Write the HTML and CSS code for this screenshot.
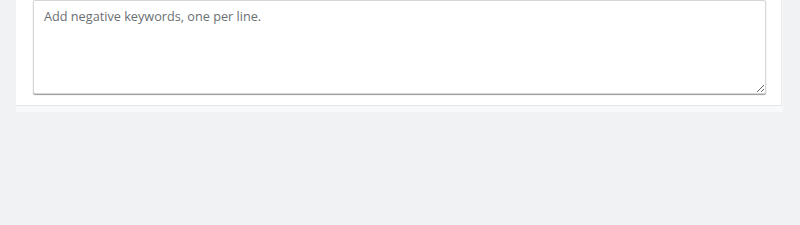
FILE: index.html
```html
<!DOCTYPE html>
<html lang="en">
<head>
    <meta charset="UTF-8">
    <title>Negative Keywords</title>
    <link rel="stylesheet" href="styles.css">
</head>
<body>
    <div class="page">
        <div class="panel">
            <div class="card">
                <textarea class="keywords" placeholder="Add negative keywords, one per line."></textarea>
            </div>
        </div>
    </div>
</body>
</html>
```

FILE: styles.css
```css
body {
    margin: 0;
    background-color: #f1f2f4;
    font-family: "Open Sans", Arial, sans-serif;
}

.page {
    padding: 0 17px 0 16px;
}

/* lighter strip under the card */
.panel {
    background-color: #f8f9fa;
    padding: 0 1px 6px 0;
}

.card {
    background-color: #fff;
    padding: 0 15px 11px 17px;
    border-right: 1px solid #e6e8ea;
    border-bottom: 1px solid #e4e6e8;
}

.keywords {
    display: block;
    box-sizing: border-box;
    width: 100%;
    height: 94px;
    margin: 0;
    padding: 6px 10px;
    font-family: "Open Sans", Arial, sans-serif;
    font-size: 12.7px;
    color: #333;
    border: 1px solid #d4d6d8;
    border-radius: 2px;
    box-shadow: 0 1px 1px #9a9a9a;
    resize: vertical;
}

.keywords::placeholder {
    color: #6b6f73;
}
```
